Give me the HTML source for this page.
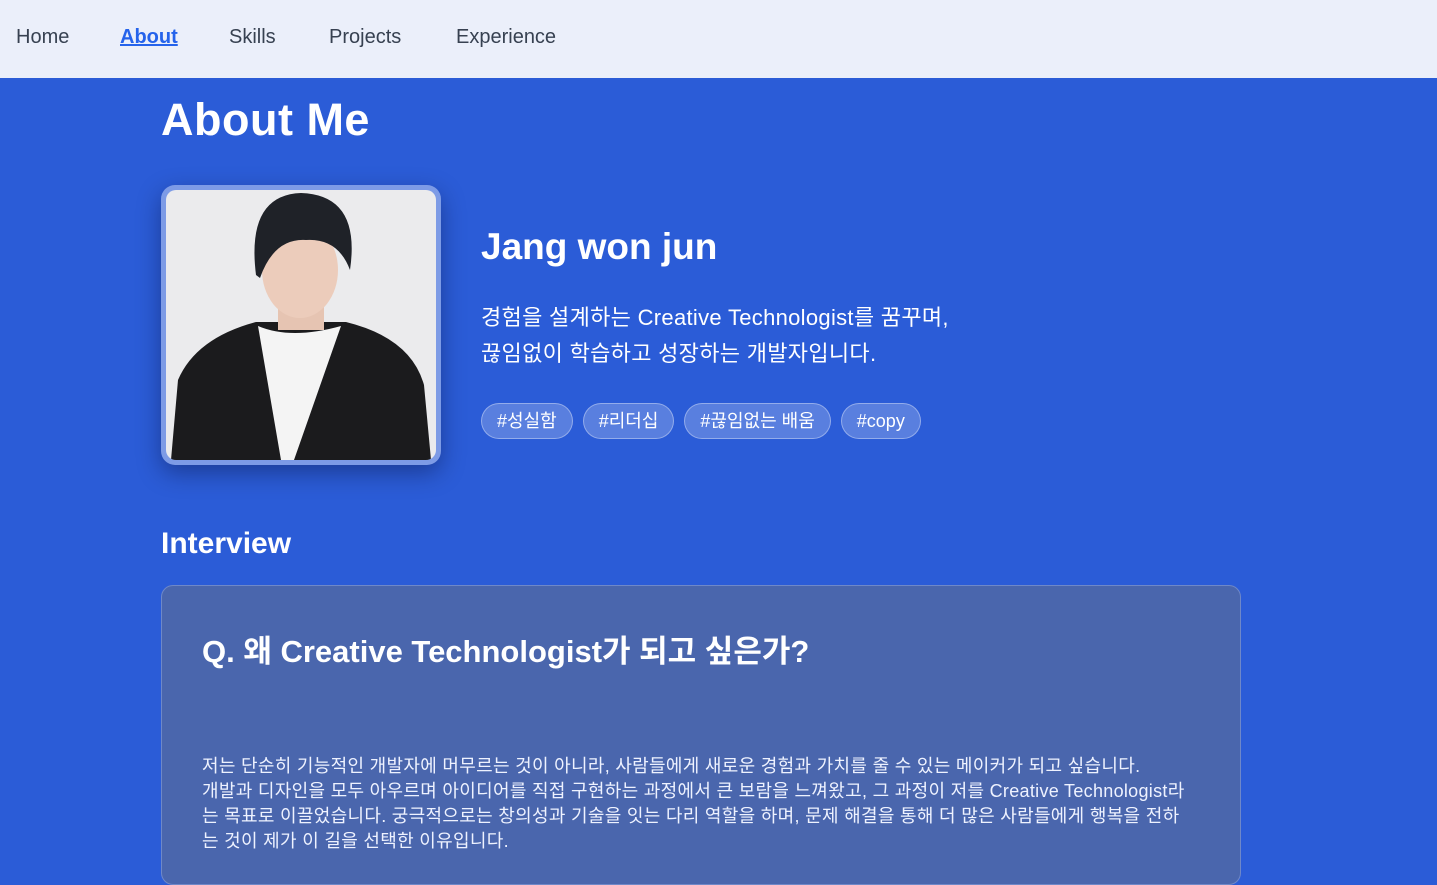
<!DOCTYPE html>
<html><head><meta charset="utf-8"><style>
*{margin:0;padding:0;box-sizing:border-box}
body{width:1437px;height:857px;overflow:hidden;background:#2b5cd7;font-family:"Liberation Sans","Noto Sans CJK KR",sans-serif;color:#fff}
nav{height:78px;background:#ebeffa;position:relative}
nav a{position:absolute;top:26px;font-size:20px;color:#374151;text-decoration:none}
nav a.act{color:#2563eb;font-weight:bold;text-decoration:underline}
h1{position:absolute;left:161px;top:94px;font-size:45px;font-weight:bold;letter-spacing:.5px}
.photo{position:absolute;left:161px;top:185px;width:280px;height:280px;border-radius:14px;background:#7d9be6;padding:5px;box-shadow:0 8px 24px rgba(0,0,30,.35)}
.photo svg{display:block;border-radius:10px}
h2{position:absolute;left:481px;top:226px;font-size:37px;font-weight:bold}
.desc{position:absolute;left:481px;top:300px;font-size:22px;line-height:36px;white-space:nowrap;letter-spacing:.3px}
.tags{position:absolute;left:481px;top:403px;display:flex;gap:10px}
.tags span{height:36px;padding:0 15px;border-radius:18px;background:rgba(255,255,255,.22);border:1px solid rgba(255,255,255,.35);font-size:18px;line-height:34px}
h3{position:absolute;left:161px;top:527px;font-size:30px;font-weight:bold}
.card{position:absolute;left:161px;top:585px;width:1080px;height:300px;background:#4a66ad;border:1px solid #6f88c8;border-radius:12px}
.card h4{position:absolute;left:40px;top:40px;font-size:31px;font-weight:bold;white-space:nowrap}
.card p{position:absolute;left:40px;top:168px;font-size:18px;line-height:25px;color:#eef2ff;white-space:nowrap;letter-spacing:.3px}
</style></head><body>
<nav>
<a style="left:16px">Home</a>
<a class="act" style="left:120px">About</a>
<a style="left:229px">Skills</a>
<a style="left:329px">Projects</a>
<a style="left:456px">Experience</a>
</nav>
<h1>About Me</h1>
<div class="photo"><svg width="270" height="270" viewBox="0 0 270 270">
<rect width="270" height="270" fill="#ebebed"/>
<path d="M5 270 L12 190 Q30 148 90 132 L180 132 Q245 148 258 195 L265 270Z" fill="#1b1b1d"/>
<path d="M92 136 Q125 150 175 136 L128 270 L115 270Z" fill="#f4f4f4"/>
<rect x="112" y="100" width="46" height="40" fill="#e6c4b2"/>
<ellipse cx="134" cy="80" rx="38" ry="48" fill="#ecccbb"/>
<path d="M90 85 Q80 5 135 3 Q195 5 184 80 Q172 48 140 50 Q108 48 94 88Z" fill="#1f2228"/>
</svg></div>
<h2>Jang won jun</h2>
<div class="desc">경험을 설계하는 Creative Technologist를 꿈꾸며,<br>끊임없이 학습하고 성장하는 개발자입니다.</div>
<div class="tags"><span>#성실함</span><span>#리더십</span><span>#끊임없는 배움</span><span>#copy</span></div>
<h3>Interview</h3>
<div class="card">
<h4>Q. 왜 Creative Technologist가 되고 싶은가?</h4>
<p>저는 단순히 기능적인 개발자에 머무르는 것이 아니라, 사람들에게 새로운 경험과 가치를 줄 수 있는 메이커가 되고 싶습니다.<br>개발과 디자인을 모두 아우르며 아이디어를 직접 구현하는 과정에서 큰 보람을 느껴왔고, 그 과정이 저를 Creative Technologist라<br>는 목표로 이끌었습니다. 궁극적으로는 창의성과 기술을 잇는 다리 역할을 하며, 문제 해결을 통해 더 많은 사람들에게 행복을 전하<br>는 것이 제가 이 길을 선택한 이유입니다.</p>
</div>
</body></html>
